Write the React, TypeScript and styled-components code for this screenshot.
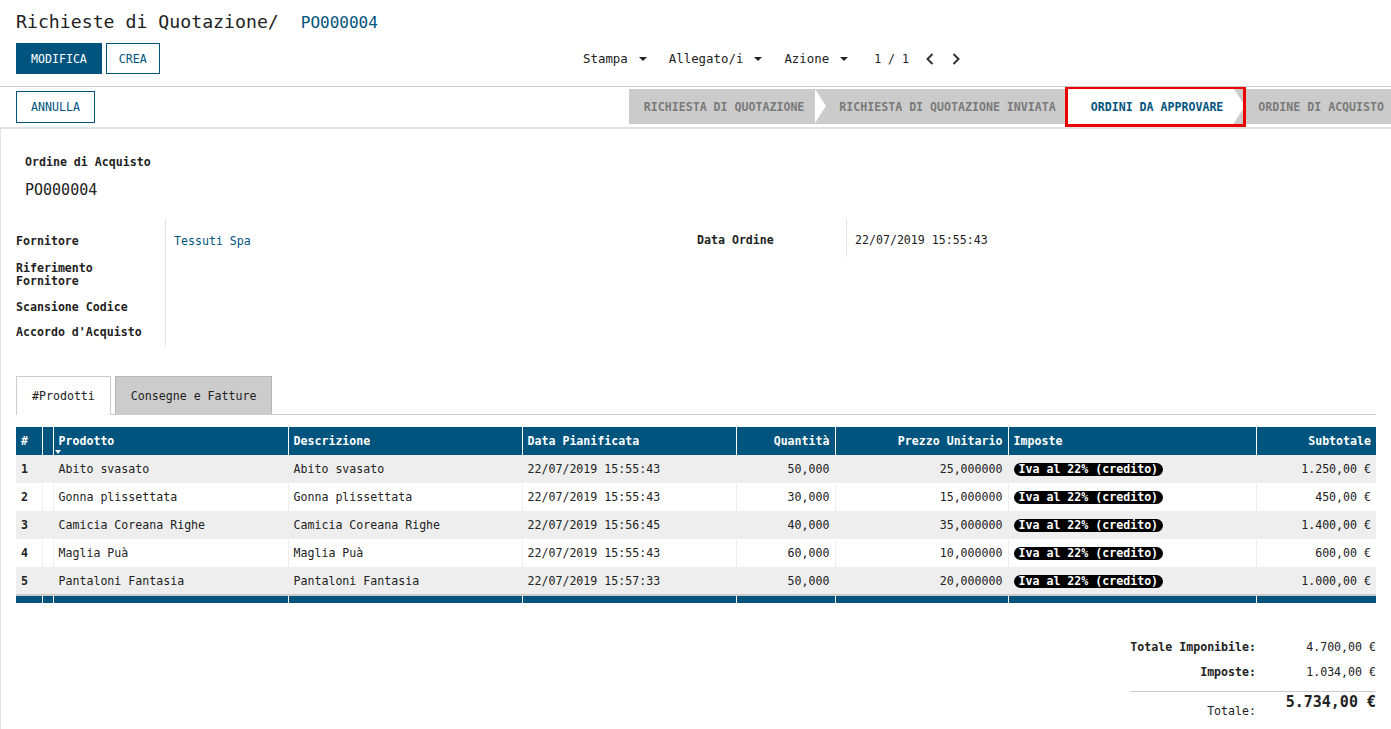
import React from "react"
import styled, {createGlobalStyle} from "styled-components"

//Palette

const COLORS = {
    blue: "#01547e",
    text: "#222222",
    line: "#cccccc",
    lightLine: "#e2e2e2",
    stepGray: "#cbcbcb",
    stepText: "#7a7a7a",
    rowGray: "#eeeeee",
    red: "#ee0000",
}

const GlobalStyle = createGlobalStyle`
  * { box-sizing: border-box; }
  body {
    margin: 0;
    background: #ffffff;
    color: ${COLORS.text};
    font-family: "DejaVu Sans Mono", monospace;
    font-size: 11.6px;
    overflow: hidden;
  }
`

//Control panel

const ControlPanel = styled.header`
  padding: 0 16px;
  height: 87px;
  border-bottom: 1px solid ${COLORS.line};
`

const Breadcrumb = styled.div`
  display: flex;
  align-items: center;
  height: 43px;
  font-size: 18.2px;
  color: ${COLORS.text};
`

const Crumb = styled.span`
  margin-left: 22px;
  margin-top: 1px;
  font-size: 16px;
  color: ${COLORS.blue};
`

const CpRow = styled.div`
  display: grid;
  grid-template-columns: 567px auto 1fr;
  align-items: center;
  height: 31px;
`

const ButtonGroup = styled.div`
  display: flex;
  gap: 4px;
`

const Button = styled.button<{ $primary?: boolean; $pad?: number }>`
  height: ${p => p.$primary !== undefined ? "31px" : "32px"};
  padding: 0 ${p => p.$pad ?? 13}px;
  border: 1px solid ${COLORS.blue};
  border-radius: 0;
  background: ${p => p.$primary ? COLORS.blue : "#ffffff"};
  color: ${p => p.$primary ? "#ffffff" : COLORS.blue};
  font-family: inherit;
  font-size: 11.6px;
`

const Sidebar = styled.div`
  display: flex;
  align-items: center;
  gap: 22px;
`

const Dropdown = styled.span`
  display: flex;
  align-items: center;
  gap: 11px;
  font-size: 12.4px;
  color: ${COLORS.text};
`

const Caret = styled.span`
  width: 0;
  height: 0;
  border-left: 4px solid transparent;
  border-right: 4px solid transparent;
  border-top: 4px solid ${COLORS.text};
`

const Pager = styled.div`
  display: flex;
  align-items: center;
  gap: 16px;
  margin-left: 4px;
  font-size: 11.6px;

  svg {
    display: block;
  }
`

const Chevron = ({dir}: { dir: "left" | "right" }) => (
    <svg width="10" height="14" viewBox="0 0 10 14">
        <path d={dir === "left" ? "M7.5 2 L2.5 7 L7.5 12" : "M2.5 2 L7.5 7 L2.5 12"}
              fill="none" stroke="#333333" strokeWidth="2"/>
    </svg>
)

//Status bar

const StatusRow = styled.div`
  display: flex;
  justify-content: space-between;
  align-items: center;
  height: 42px;
  padding-left: 16px;
  border-bottom: 2px solid ${COLORS.lightLine};
  overflow: hidden;
`

const Steps = styled.div`
  display: flex;
  align-self: flex-start;
  margin-top: 2px;
  height: 35px;
`

const Step = styled.div<{ $active?: boolean; $first?: boolean; $padRight?: number }>`
  position: relative;
  display: flex;
  align-items: center;
  padding: 0 ${p => p.$padRight ?? 11}px 0 ${p => p.$first ? 15 : 24}px;
  background: ${p => p.$active ? "#ffffff" : COLORS.stepGray};
  color: ${p => p.$active ? COLORS.blue : COLORS.stepText};
  font-weight: bold;
  font-size: 11.6px;
  white-space: nowrap;

  ${p => !p.$first && `
    &::before {
      content: "";
      position: absolute;
      left: 0;
      top: 0;
      border-top: 17.5px solid transparent;
      border-bottom: 17.5px solid transparent;
      border-left: 11px solid #ffffff;
    }
  `}
`

const Highlight = styled.span`
  position: absolute;
  top: -3px;
  bottom: -3px;
  left: -2px;
  right: -12px;
  border: 3px solid ${COLORS.red};
  z-index: 2;
`

//Sheet

const Sheet = styled.main`
  min-height: 600px;
  padding: 25px 15px 0 15px;
  border-left: 1px solid ${COLORS.lightLine};
`

const TitleBlock = styled.div`
  padding-left: 9px;
`

const SmallLabel = styled.div`
  font-weight: bold;
  line-height: 16px;
`

const BigName = styled.div`
  margin-top: 10px;
  font-size: 15px;
  line-height: 20px;
`

const Groups = styled.div`
  display: grid;
  grid-template-columns: 681px 1fr;
  margin-top: 19px;
`

const Group = styled.div`
  display: flex;
  align-items: flex-start;
`

const LabelCol = styled.div<{ $tight?: boolean }>`
  width: 149px;
  padding: 4px 0 ${p => p.$tight ? 0 : 5}px;
`

const ValueCol = styled.div<{ $tight?: boolean }>`
  flex: 1;
  padding: 4px 0 ${p => p.$tight ? 0 : 5}px 8px;
  border-left: 1px solid ${COLORS.lightLine};
`

const Cell = styled.div<{ $h: number; $bold?: boolean; $link?: boolean }>`
  display: flex;
  align-items: center;
  height: ${p => p.$h}px;
  font-weight: ${p => p.$bold ? "bold" : "normal"};
  color: ${p => p.$link ? COLORS.blue : COLORS.text};
  line-height: 13px;
`

//Tabs

const TabBar = styled.div`
  display: flex;
  gap: 4px;
  height: 39px;
  margin-top: 30px;
  border-bottom: 1px solid ${COLORS.line};
`

const Tab = styled.div<{ $active?: boolean }>`
  display: flex;
  align-items: center;
  padding: 0 15px;
  height: ${p => p.$active ? "39px" : "38px"};
  background: ${p => p.$active ? "#ffffff" : COLORS.line};
  border: 1px solid ${p => p.$active ? COLORS.line : "#b5b5b5"};
  border-bottom: none;
  margin-bottom: ${p => p.$active ? "-1px" : "0"};
  font-size: 11.6px;
`

//Lines table

const Table = styled.table`
  width: 1360px;
  margin-top: 12px;
  border-collapse: collapse;
  table-layout: fixed;
`

const Th = styled.th<{ $right?: boolean }>`
  position: relative;
  height: 28px;
  padding: 0 5px;
  background: ${COLORS.blue};
  color: #ffffff;
  font-weight: bold;
  text-align: ${p => p.$right ? "right" : "left"};
  border-left: 1px solid #ffffff;
  white-space: nowrap;

  &:first-child {
    border-left: none;
  }
`

const SortCaret = styled.span`
  position: absolute;
  left: 1px;
  bottom: 1px;
  border-left: 3px solid transparent;
  border-right: 3px solid transparent;
  border-top: 4px solid #ffffff;
`

const Tr = styled.tr<{ $odd?: boolean }>`
  background: ${p => p.$odd ? COLORS.rowGray : "#ffffff"};
`

const Td = styled.td<{ $right?: boolean; $bold?: boolean }>`
  height: 28px;
  padding: 0 5px;
  text-align: ${p => p.$right ? "right" : "left"};
  font-weight: ${p => p.$bold ? "bold" : "normal"};
  border-left: 1px solid ${COLORS.rowGray};
  white-space: nowrap;

  &:first-child {
    border-left: none;
  }
`

const FootTd = styled.td`
  height: 8px;
  padding: 0;
  background: ${COLORS.blue};
  border-top: 2px solid ${COLORS.line};
  border-left: 1px solid #ffffff;

  &:first-child {
    border-left: none;
  }
`

const TaxPill = styled.span`
  display: inline-block;
  padding: 0 5px;
  line-height: 13px;
  border-radius: 7px;
  background: #000000;
  color: #ffffff;
  font-weight: bold;
`

//Totals

const Totals = styled.div`
  display: grid;
  grid-template-columns: 126px 120px;
  width: 246px;
  margin: 31px 0 0 auto;
`

const TotLabel = styled.div`
  height: 25px;
  display: flex;
  align-items: center;
  justify-content: flex-end;
  font-weight: bold;
`

const TotValue = styled.div`
  height: 25px;
  display: flex;
  align-items: center;
  justify-content: flex-end;
`

const TotalLine = styled.div`
  grid-column: 1 / 3;
  height: 1px;
  margin-top: 7px;
  background: ${COLORS.line};
`

const GrandLabel = styled.div`
  margin-top: 12px;
  text-align: right;
  line-height: 14px;
`

const GrandValue = styled.div`
  margin-top: 1px;
  text-align: right;
  font-size: 15px;
  font-weight: bold;
  line-height: 18px;
`

const COLUMNS = [
    {label: "#", width: 26},
    {label: "", width: 11},
    {label: "Prodotto", width: 235},
    {label: "Descrizione", width: 234},
    {label: "Data Pianificata", width: 214},
    {label: "Quantità", width: 99, right: true},
    {label: "Prezzo Unitario", width: 173, right: true},
    {label: "Imposte", width: 248},
    {label: "Subtotale", width: 120, right: true},
]

const LINES = [
    {name: "Abito svasato", date: "22/07/2019 15:55:43", qty: "50,000", price: "25,000000", sub: "1.250,00 €"},
    {name: "Gonna plissettata", date: "22/07/2019 15:55:43", qty: "30,000", price: "15,000000", sub: "450,00 €"},
    {name: "Camicia Coreana Righe", date: "22/07/2019 15:56:45", qty: "40,000", price: "35,000000", sub: "1.400,00 €"},
    {name: "Maglia Puà", date: "22/07/2019 15:55:43", qty: "60,000", price: "10,000000", sub: "600,00 €"},
    {name: "Pantaloni Fantasia", date: "22/07/2019 15:57:33", qty: "50,000", price: "20,000000", sub: "1.000,00 €"},
]

const STEPS = [
    "RICHIESTA DI QUOTAZIONE",
    "RICHIESTA DI QUOTAZIONE INVIATA",
    "ORDINI DA APPROVARE",
    "ORDINE DI ACQUISTO",
]

function App() {
    return (
        <>
            <GlobalStyle/>
            <ControlPanel>
                <Breadcrumb>
                    Richieste di Quotazione/<Crumb>PO000004</Crumb>
                </Breadcrumb>
                <CpRow>
                    <ButtonGroup>
                        <Button $primary $pad={14}>MODIFICA</Button>
                        <Button $primary={false} $pad={12}>CREA</Button>
                    </ButtonGroup>
                    <Sidebar>
                        <Dropdown>Stampa <Caret/></Dropdown>
                        <Dropdown>Allegato/i <Caret/></Dropdown>
                        <Dropdown>Azione <Caret/></Dropdown>
                        <Pager>
                            <span>1 / 1</span>
                            <Chevron dir="left"/>
                            <Chevron dir="right"/>
                        </Pager>
                    </Sidebar>
                </CpRow>
            </ControlPanel>

            <StatusRow>
                <Button $pad={14}>ANNULLA</Button>
                <Steps>
                    {STEPS.map((s, i) => (
                        <Step key={s} $first={i === 0} $active={i === 2} $padRight={i === 3 ? 7 : 11}>
                            {s}
                            {i === 2 && <Highlight/>}
                        </Step>
                    ))}
                </Steps>
            </StatusRow>

            <Sheet>
                <TitleBlock>
                    <SmallLabel>Ordine di Acquisto</SmallLabel>
                    <BigName>PO000004</BigName>
                </TitleBlock>

                <Groups>
                    <Group>
                        <LabelCol>
                            <Cell $h={36} $bold>Fornitore</Cell>
                            <Cell $h={32} $bold>Riferimento<br/>Fornitore</Cell>
                            <Cell $h={32} $bold>Scansione Codice</Cell>
                            <Cell $h={18} $bold>Accordo d'Acquisto</Cell>
                        </LabelCol>
                        <ValueCol>
                            <Cell $h={36} $link>Tessuti Spa</Cell>
                            <Cell $h={32}/>
                            <Cell $h={32}/>
                            <Cell $h={18}/>
                        </ValueCol>
                    </Group>
                    <Group>
                        <LabelCol $tight>
                            <Cell $h={34} $bold>Data Ordine</Cell>
                        </LabelCol>
                        <ValueCol $tight>
                            <Cell $h={34}>22/07/2019 15:55:43</Cell>
                        </ValueCol>
                    </Group>
                </Groups>

                <TabBar>
                    <Tab $active>#Prodotti</Tab>
                    <Tab>Consegne e Fatture</Tab>
                </TabBar>

                <Table>
                    <colgroup>
                        {COLUMNS.map((c, i) => <col key={i} style={{width: c.width}}/>)}
                    </colgroup>
                    <thead>
                        <tr>
                            {COLUMNS.map((c, i) => (
                                <Th key={i} $right={c.right}>
                                    {c.label}
                                    {c.label === "Prodotto" && <SortCaret/>}
                                </Th>
                            ))}
                        </tr>
                    </thead>
                    <tbody>
                        {LINES.map((l, i) => (
                            <Tr key={i} $odd={i % 2 === 0}>
                                <Td $bold>{i + 1}</Td>
                                <Td/>
                                <Td>{l.name}</Td>
                                <Td>{l.name}</Td>
                                <Td>{l.date}</Td>
                                <Td $right>{l.qty}</Td>
                                <Td $right>{l.price}</Td>
                                <Td><TaxPill>Iva al 22% (credito)</TaxPill></Td>
                                <Td $right>{l.sub}</Td>
                            </Tr>
                        ))}
                    </tbody>
                    <tfoot>
                        <tr>
                            {COLUMNS.map((c, i) => <FootTd key={i}/>)}
                        </tr>
                    </tfoot>
                </Table>

                <Totals>
                    <TotLabel>Totale Imponibile:</TotLabel>
                    <TotValue>4.700,00 €</TotValue>
                    <TotLabel>Imposte:</TotLabel>
                    <TotValue>1.034,00 €</TotValue>
                    <TotalLine/>
                    <GrandLabel>Totale:</GrandLabel>
                    <GrandValue>5.734,00 €</GrandValue>
                </Totals>
            </Sheet>
        </>
    )
}

export default App
